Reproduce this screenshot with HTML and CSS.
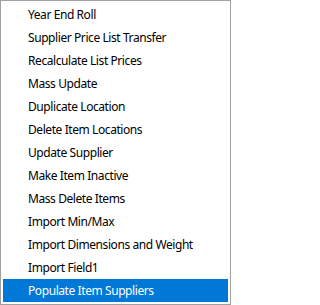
FILE: index.html
```html
<!DOCTYPE html>
<html>
<head>
<meta charset="utf-8">
<link rel="stylesheet" href="styles.css">
</head>
<body>
<div class="menu">
  <div class="item">Year End Roll</div>
  <div class="item">Supplier Price List Transfer</div>
  <div class="item">Recalculate List Prices</div>
  <div class="item">Mass Update</div>
  <div class="item">Duplicate Location</div>
  <div class="item">Delete Item Locations</div>
  <div class="item">Update Supplier</div>
  <div class="item">Make Item Inactive</div>
  <div class="item">Mass Delete Items</div>
  <div class="item">Import Min/Max</div>
  <div class="item">Import Dimensions and Weight</div>
  <div class="item">Import Field1</div>
  <div class="item active">Populate Item Suppliers</div>
</div>
</body>
</html>
```

FILE: styles.css
```css
html, body {
  margin: 0;
  padding: 0;
  background: #ffffff;
}
.menu {
  width: 231px;
  height: 305px;
  box-sizing: border-box;
  border: 1px solid #a0a0a0;
  padding: 2px;
  background: #ffffff;
  display: flex;
  flex-direction: column;
  font-family: "Noto Sans", "Liberation Sans", sans-serif;
  font-size: 12px;
  letter-spacing: -0.42px;
  color: #000000;
}
.item {
  height: 23px;
  line-height: 23px;
  padding-left: 25px;
  white-space: nowrap;
}
.item.active {
  background: #0078d7;
  color: #ffffff;
}
```
